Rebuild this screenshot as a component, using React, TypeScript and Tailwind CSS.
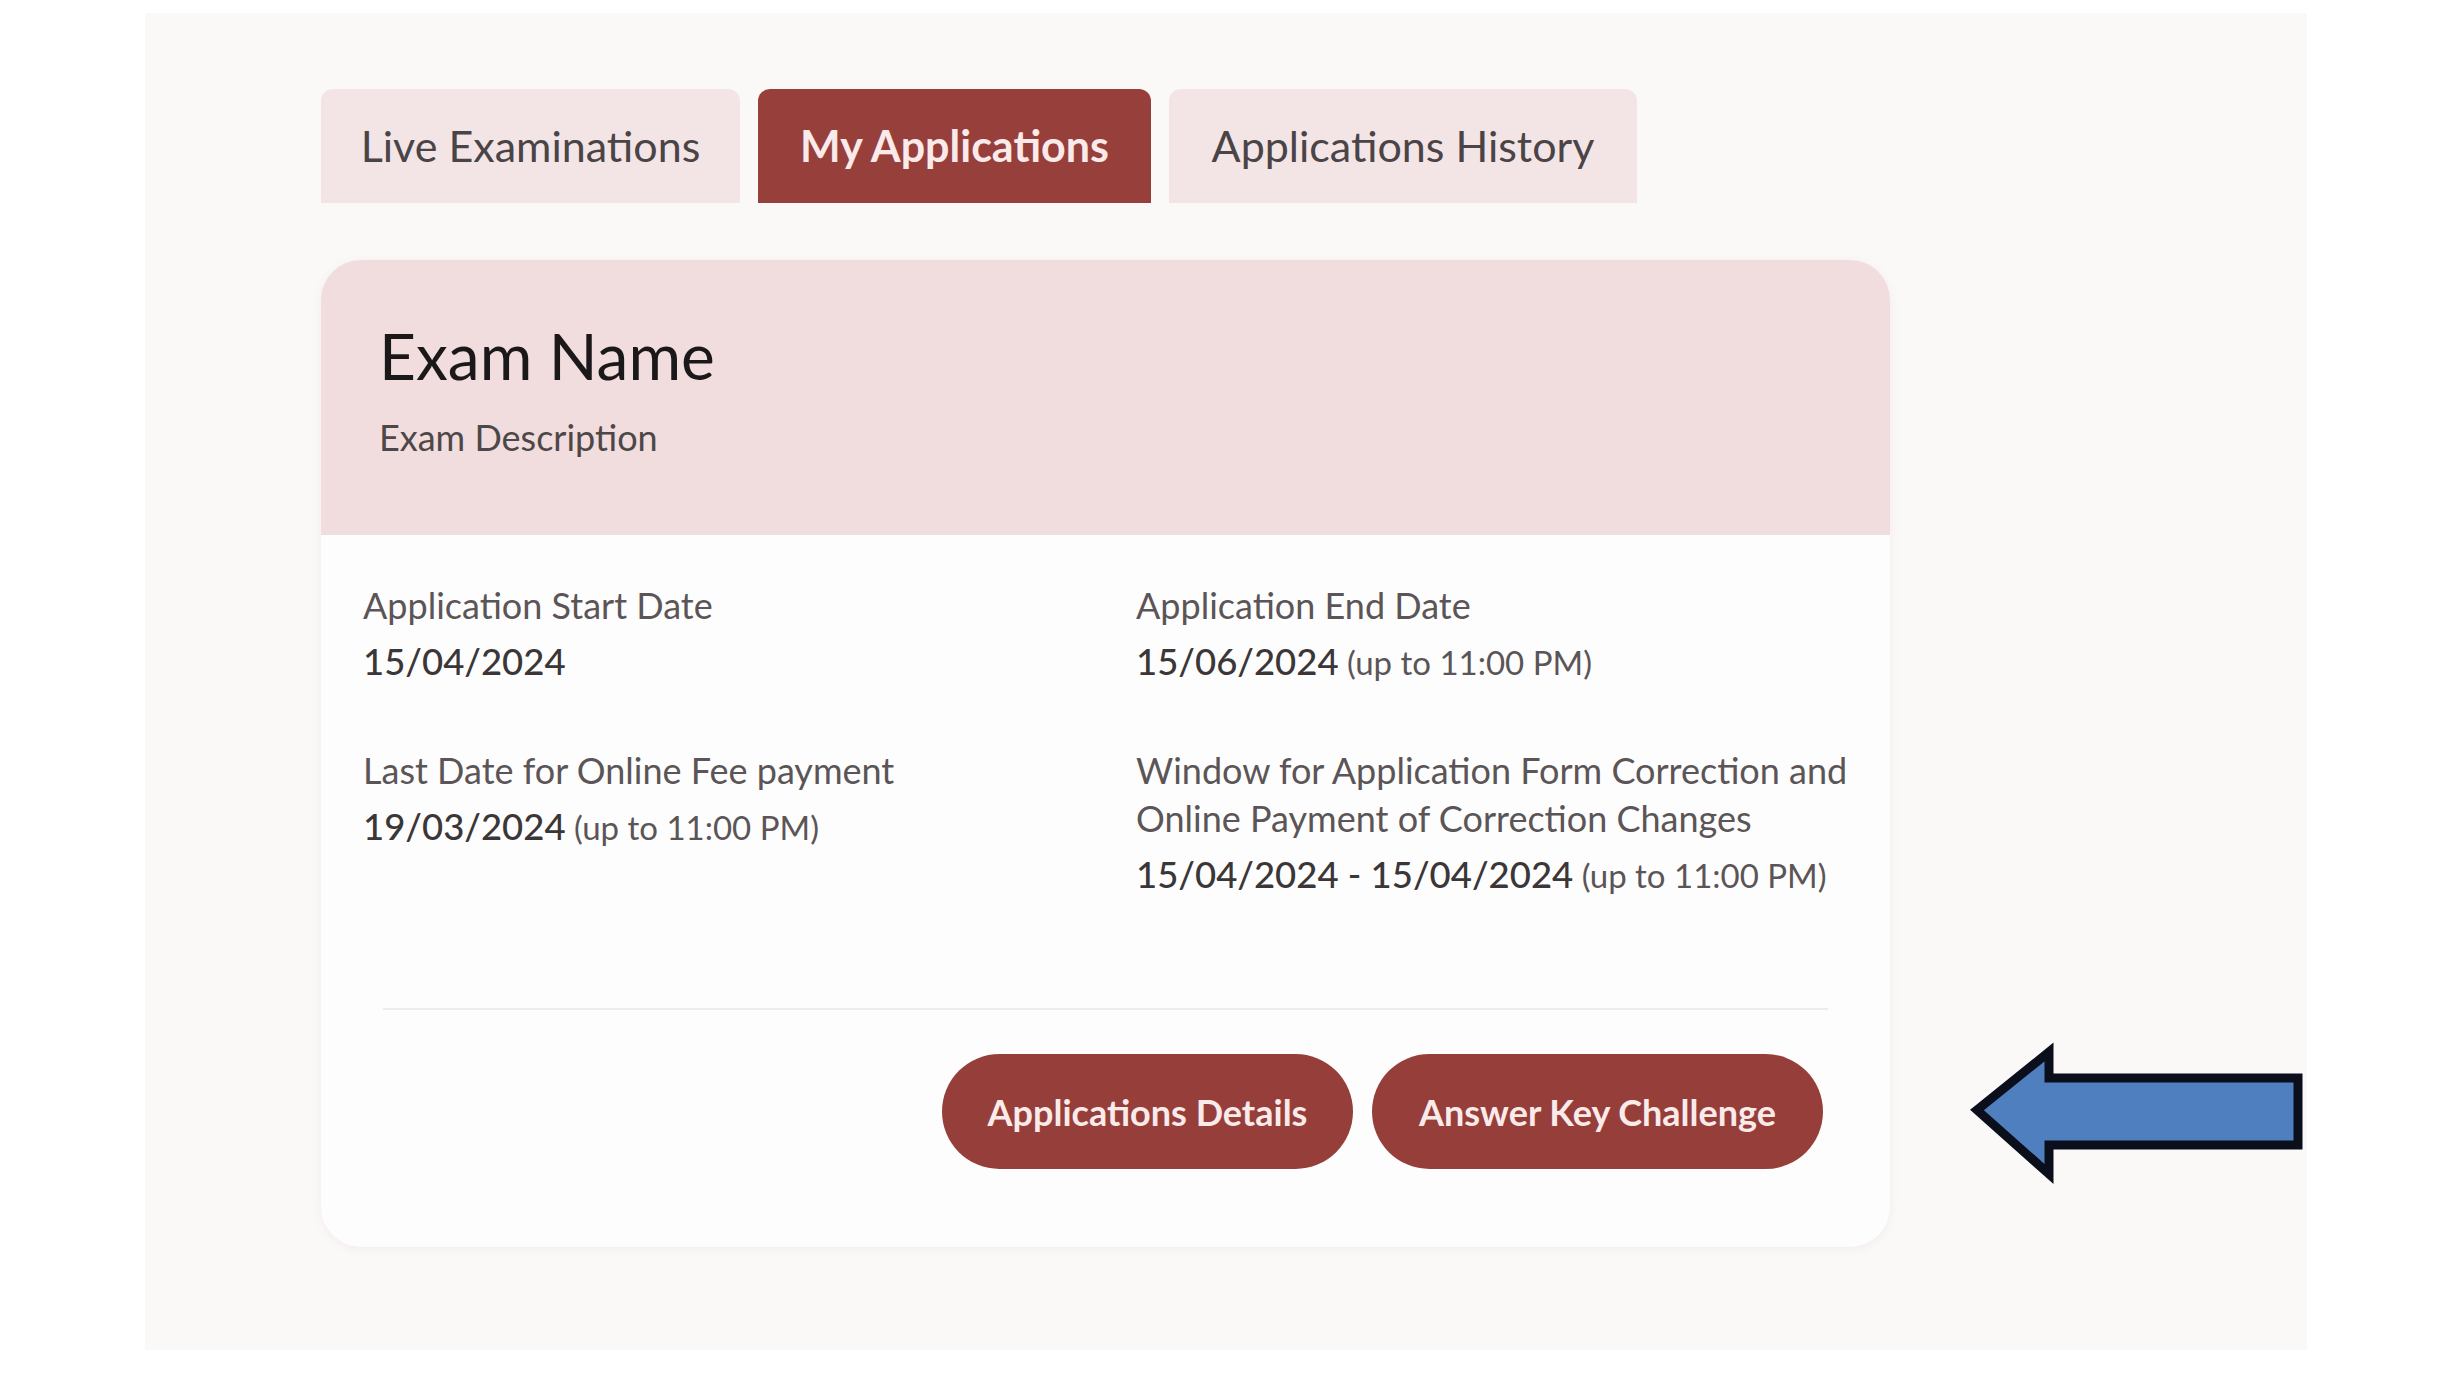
import React from 'react';

const tabs = [
  { label: 'Live Examinations', width: 'w-[419px]', active: false },
  { label: 'My Applications', width: 'w-[393px]', active: true },
  { label: 'Applications History', width: 'w-[468px]', active: false },
];

type Field = {
  label: string[];
  value: string;
  note?: string;
};

const fields: Field[] = [
  { label: ['Application Start Date'], value: '15/04/2024' },
  { label: ['Application End Date'], value: '15/06/2024', note: '(up to 11:00 PM)' },
  { label: ['Last Date for Online Fee payment'], value: '19/03/2024', note: '(up to 11:00 PM)' },
  {
    label: ['Window for Application Form Correction and', 'Online Payment of Correction Changes'],
    value: '15/04/2024 - 15/04/2024',
    note: '(up to 11:00 PM)',
  },
];

const FieldBlock = ({ field }: { field: Field }) => (
  <div>
    {field.label.map((line) => (
      <div key={line} className="text-[36px] leading-[48px] text-[#5b5557]">
        {line}
      </div>
    ))}
    <div className="leading-[64px] text-[#3b3637]">
      <span className="text-[36.5px] font-medium">{field.value}</span>
      {field.note && <span className="text-[33px] text-[#5b5557]"> {field.note}</span>}
    </div>
  </div>
);

const PointerArrow = () => (
  <svg width="345" height="150" viewBox="0 0 345 150" className="absolute left-[1820px] top-[1027px]">
    <polygon
      points="12,70 84,12 84,38 333,38 333,105 84,105 84,134"
      fill="#4f7fbf"
      stroke="#0b0f1c"
      strokeWidth="9"
      strokeLinejoin="miter"
    />
  </svg>
);

export default function App() {
  return (
    <div className="w-full h-[1380px] bg-white pt-[13px] pl-[145px] font-['Lato',sans-serif]">
      <div className="relative w-[2162px] h-[1337px] bg-[#fbf9f8] pt-[76px] pl-[176px]">
        {/* Tabs */}
        <div className="flex gap-[18px]">
          {tabs.map((tab) => (
            <div
              key={tab.label}
              className={`${tab.width} h-[114px] rounded-t-[12px] flex items-center justify-center text-[43px] ${
                tab.active ? 'bg-[#973f3b] text-[#fbeaea] font-bold' : 'bg-[#f3e5e6] text-[#4a4446]'
              }`}
            >
              {tab.label}
            </div>
          ))}
        </div>

        {/* Exam card */}
        <div className="mt-[57px] w-[1569px] h-[987px] rounded-[40px] bg-[#fefdfd] shadow-[0_2px_10px_rgba(120,90,90,0.08)] overflow-hidden flex flex-col">
          <div className="h-[275px] shrink-0 bg-[#f1dcde] pt-[58px] pl-[58px]">
            <h2 className="text-[64px] leading-[76px] text-[#1b1819]">Exam Name</h2>
            <p className="mt-[21px] text-[36px] leading-[44px] text-[#4e4748]">Exam Description</p>
          </div>

          <div className="flex-1 flex flex-col px-[42px] pt-[46px]">
            <div className="grid grid-cols-[773px_1fr] gap-y-[45px]">
              {fields.map((field) => (
                <FieldBlock key={field.value + field.label[0]} field={field} />
              ))}
            </div>

            <div className="mt-auto mx-[20px] h-[2px] bg-[#efebeb]" />

            <div className="flex justify-end gap-[19px] pr-[25px] pt-[44px] pb-[78px]">
              <button className="w-[411px] h-[115px] rounded-full bg-[#963f3a] text-[#fbeaea] text-[36px] font-bold">
                Applications Details
              </button>
              <button className="w-[451px] h-[115px] rounded-full bg-[#963f3a] text-[#fbeaea] text-[36px] font-bold">
                Answer Key Challenge
              </button>
            </div>
          </div>
        </div>

        <PointerArrow />
      </div>
    </div>
  );
}
